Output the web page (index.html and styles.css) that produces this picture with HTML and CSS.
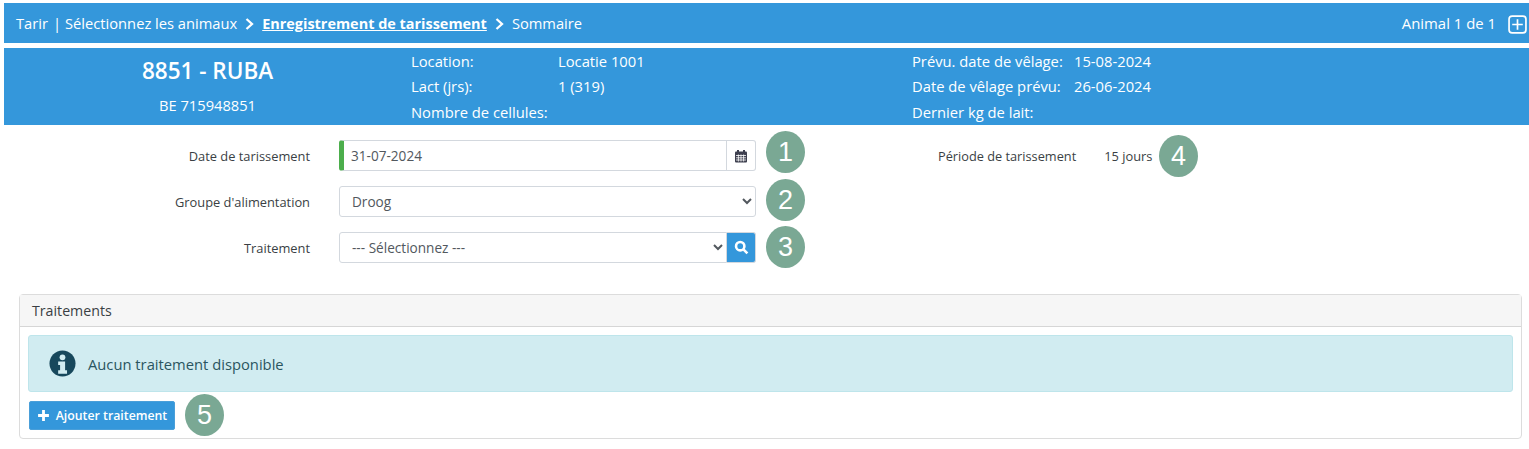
FILE: index.html
```html
<!DOCTYPE html>
<html lang="fr">
<head>
<meta charset="utf-8">
<title>Tarir</title>
<link rel="stylesheet" href="styles.css">
</head>
<body>
<header class="topbar">
  <nav class="crumbs">
    <span>Tarir</span><span class="sep">|</span><span>Sélectionnez les animaux</span>
    <svg class="chev" viewBox="0 0 9 14"><path d="M1.5 2 7 7 1.5 12"/></svg>
    <a class="current">Enregistrement de tarissement</a>
    <svg class="chev" viewBox="0 0 9 14"><path d="M1.5 2 7 7 1.5 12"/></svg>
    <span>Sommaire</span>
  </nav>
  <div class="counter">
    <span>Animal 1 de 1</span>
    <svg class="plus-box" viewBox="0 0 18 18"><rect x="1" y="1" width="16" height="16" rx="3"/><path d="M9 4v10M4 9h10"/></svg>
  </div>
</header>

<section class="infobar">
  <div class="identity">
    <div class="animal-name">8851 - RUBA</div>
    <div class="animal-id">BE 715948851</div>
  </div>
  <dl class="facts facts-a">
    <dt>Location:</dt><dd>Locatie 1001</dd>
    <dt>Lact (jrs):</dt><dd>1 (319)</dd>
    <dt>Nombre de cellules:</dt><dd></dd>
  </dl>
  <dl class="facts facts-b">
    <dt>Prévu. date de vêlage:</dt><dd>15-08-2024</dd>
    <dt>Date de vêlage prévu:</dt><dd>26-06-2024</dd>
    <dt>Dernier kg de lait:</dt><dd></dd>
  </dl>
</section>

<main class="content">
  <form class="form">
    <div class="form-main">
      <div class="row">
        <label class="label">Date de tarissement</label>
        <div class="group required">
          <input class="control" type="text" value="31-07-2024">
          <span class="addon">
            <svg class="cal" viewBox="0 0 14 14"><rect x="1" y="2.5" width="12" height="11" rx="1" fill="#3d3f4e"/><rect x="3" y="1" width="2" height="3" fill="#3d3f4e"/><rect x="9" y="1" width="2" height="3" fill="#3d3f4e"/><path d="M2 6.5h10M2 8.8h10M2 11h10M4.4 5.5v7M7 5.5v7M9.6 5.5v7" stroke="#fff" stroke-width=".8"/></svg>
          </span>
        </div>
      </div>
      <div class="row">
        <label class="label">Groupe d'alimentation</label>
        <div class="group">
          <select class="control"><option>Droog</option></select>
        </div>
      </div>
      <div class="row">
        <label class="label">Traitement</label>
        <div class="group">
          <select class="control"><option>--- Sélectionnez ---</option></select>
          <button class="search" type="button" aria-label="Rechercher">
            <svg viewBox="0 0 14 14"><circle cx="5.8" cy="5.8" r="3.9"/><path d="M8.8 8.8 12.5 12.5"/></svg>
          </button>
        </div>
      </div>
    </div>
    <div class="period">
      <span class="period-label">Période de tarissement</span>
      <span class="period-value">15 jours</span>
    </div>
  </form>

  <section class="panel">
    <h2 class="panel-head">Traitements</h2>
    <div class="panel-body">
      <div class="alert">
        <svg class="info" viewBox="0 0 28 28"><circle cx="14" cy="14" r="13.5" fill="#17485c"/><circle cx="14" cy="7.6" r="3" fill="#d1ecf1"/><path d="M9.5 12h7.2v9h2v3.5H9.5V21h2v-5.5h-2z" fill="#d1ecf1"/></svg>
        <span>Aucun traitement disponible</span>
      </div>
      <button class="add" type="button">
        <svg viewBox="0 0 12 12"><path d="M6 1v10M1 6h10"/></svg>Ajouter traitement
      </button>
    </div>
  </section>
</main>

<span class="badge b1">1</span>
<span class="badge b2">2</span>
<span class="badge b3">3</span>
<span class="badge b4">4</span>
<span class="badge b5">5</span>
</body>
</html>
```
FILE: styles.css
```css
* { box-sizing: border-box; }
html, body { margin: 0; height: 449px; overflow: hidden; }
body {
  position: relative;
  padding: 3px 0 0 4px;
  background: #fff;
  color: #3a3f44;
  font-family: "Open Sans", "Noto Sans", sans-serif;
  font-size: 12.85px;
}
.topbar {
  height: 40px;
  background: #3497db;
  color: #fff;
  display: flex;
  align-items: center;
  justify-content: space-between;
  padding: 0 2px 0 12px;
  font-size: 14.7px;
}
.crumbs { display: flex; align-items: center; }
.sep { margin: 0 4px 0 5px; }
.chev { width: 9px; height: 14px; margin: 1px 8px 0 8px; fill: none; stroke: #fff; stroke-width: 2.3; }
.current { font-size: 14.45px; font-weight: 700; text-decoration: underline; }
.counter { display: flex; align-items: center; gap: 12px; font-size: 14.9px; }
.plus-box { width: 19px; height: 19px; margin-top: 2px; fill: none; stroke: #fff; stroke-width: 1.6; }

.infobar {
  height: 77px;
  margin-top: 5px;
  background: #3497db;
  color: #fff;
  display: flex;
  font-size: 14.75px;
}
.identity { width: 407px; text-align: center; padding-top: 8px; }
.animal-name { font-size: 22.5px; font-weight: 600; line-height: 30px; }
.animal-id { font-size: 14.7px; line-height: 20px; margin-top: 9px; }
.facts {
  margin: 0;
  display: grid;
  grid-auto-rows: 25.5px;
  align-items: center;
}
.facts dd { margin: 0; }
.facts-a { width: 501px; grid-template-columns: 147px 1fr; }
.facts-b { grid-template-columns: 162px 1fr; }

.form { display: flex; padding-top: 15px; }
.form-main { width: 752px; display: flex; flex-direction: column; gap: 15px; }
.row { display: flex; align-items: center; height: 31px; }
.label { width: 306px; text-align: right; margin-right: 29px; }
.group { width: 417px; height: 31px; display: flex; }
.control {
  flex: 1;
  min-width: 0;
  height: 31px;
  border: 1px solid #d3d8de;
  border-radius: 3px;
  background: #fff;
  color: #52585e;
  font: inherit;
  font-size: 13.6px;
  padding: 0 8px;
}
.required .control {
  border-left: 5px solid #4cae4c;
  border-radius: 3px 0 0 3px;
  padding-left: 7px;
}
.addon {
  width: 29px;
  border: 1px solid #d3d8de;
  border-left: 0;
  border-radius: 0 3px 3px 0;
  display: flex;
  align-items: center;
  justify-content: center;
}
.cal { width: 14px; height: 14px; }
.search {
  width: 29px;
  padding: 0;
  border: 1px solid #d3d8de;
  border-left: 0;
  border-radius: 0 3px 3px 0;
  background: #3497db;
  display: flex;
  align-items: center;
  justify-content: center;
}
.search svg { width: 15px; height: 15px; fill: none; stroke: #fff; stroke-width: 2.4; }
.group:has(.search) .control { border-radius: 3px 0 0 3px; }
.period { display: flex; height: 31px; align-items: center; padding-left: 182px; }
.period-label { font-size: 12.75px; }
.period-value { margin-left: 28px; }

.panel {
  margin: 31px 7px 0 15px;
  height: 145px;
  border: 1px solid #dcdcdc;
  border-radius: 4px;
}
.panel-head {
  margin: 0;
  height: 32px;
  line-height: 31px;
  padding: 0 12px;
  background: #f6f6f6;
  border-bottom: 1px solid #d6d6d6;
  font-size: 14.2px;
  font-weight: 400;
}
.panel-body { padding: 8px 8px 0; }
.alert {
  height: 57px;
  display: flex;
  align-items: center;
  gap: 12px;
  padding-left: 20px;
  background: #d1ecf1;
  border: 1px solid #bee5eb;
  border-radius: 3px;
  color: #2a5560;
  font-size: 14.75px;
}
.info { width: 27px; height: 27px; }
.add {
  margin: 9px 0 0 1px;
  width: 146px;
  height: 29px;
  padding: 0;
  display: flex;
  align-items: center;
  justify-content: center;
  gap: 6px;
  background: #3497db;
  border: 1px solid #4a9fd9;
  border-radius: 2px;
  color: #fff;
  font: 600 12.3px "Open Sans", sans-serif;
}
.add svg { width: 13px; height: 13px; fill: none; stroke: #fff; stroke-width: 2.6; }

.badge {
  position: absolute;
  width: 39px;
  height: 42px;
  border-radius: 50%;
  background: #7aa894;
  color: #fff;
  font: 27px/42px "Liberation Sans", sans-serif;
  text-align: center;
}
.b1 { left: 766px; top: 131px; }
.b2 { left: 766px; top: 179px; }
.b3 { left: 766px; top: 226px; }
.b4 { left: 1159px; top: 135px; }
.b5 { left: 185px; top: 394px; }
```
